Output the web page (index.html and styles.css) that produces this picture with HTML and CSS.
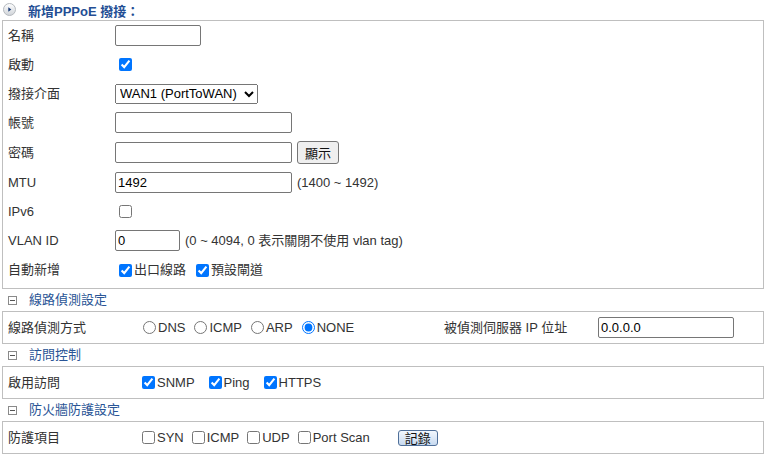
FILE: index.html
```html
<!DOCTYPE html>
<html>
<head>
<meta charset="utf-8">
<title>PPPoE</title>
<link rel="stylesheet" href="styles.css">
</head>
<body>
<div class="page">
  <div class="title">
    <svg class="title-icon" width="13" height="13" viewBox="0 0 13 13">
      <defs>
        <linearGradient id="bg" x1="0" y1="0" x2="0" y2="1">
          <stop offset="0" stop-color="#ffffff"/>
          <stop offset="1" stop-color="#cfd3d8"/>
        </linearGradient>
      </defs>
      <circle cx="6.5" cy="6.5" r="6" fill="url(#bg)" stroke="#b4b8bd" stroke-width="1"/>
      <path d="M5.3 4.2 L8.3 6.5 L5.3 8.8 Z" fill="#1d3e78"/>
    </svg>
    <span class="title-text">新增PPPoE 撥接：</span>
  </div>

  <div class="box form">
    <div class="row"><div class="lbl">名稱</div><div class="ctl"><input class="txt w86" type="text"></div></div>
    <div class="row"><div class="lbl">啟動</div><div class="ctl"><input type="checkbox" checked></div></div>
    <div class="row"><div class="lbl">撥接介面</div><div class="ctl"><select class="sel"><option>WAN1 (PortToWAN)</option></select></div></div>
    <div class="row"><div class="lbl">帳號</div><div class="ctl"><input class="txt w177" type="text"></div></div>
    <div class="row tall"><div class="lbl">密碼</div><div class="ctl"><input class="txt w177" type="password"><button class="btn-show" type="button">顯示</button></div></div>
    <div class="row"><div class="lbl">MTU</div><div class="ctl"><input class="txt w177" type="text" value="1492"><span class="hint">(1400 ~ 1492)</span></div></div>
    <div class="row"><div class="lbl">IPv6</div><div class="ctl"><input type="checkbox"></div></div>
    <div class="row"><div class="lbl">VLAN ID</div><div class="ctl"><input class="txt w65" type="text" value="0"><span class="hint">(0 ~ 4094, 0 表示關閉不使用 vlan tag)</span></div></div>
    <div class="row last"><div class="lbl">自動新增</div><div class="ctl"><label class="opt gap10"><input type="checkbox" checked>出口線路</label><label class="opt"><input type="checkbox" checked>預設閘道</label></div></div>
  </div>

  <div class="sec"><span class="minus"></span><span class="sec-text">線路偵測設定</span></div>
  <div class="box line detect">
    <div class="lbl">線路偵測方式</div>
    <div class="ctl">
      <label class="opt gap7"><input type="radio" name="m">DNS</label>
      <label class="opt gap7"><input type="radio" name="m">ICMP</label>
      <label class="opt gap7"><input type="radio" name="m">ARP</label>
      <label class="opt"><input type="radio" name="m" checked>NONE</label>
    </div>
    <div class="lbl">被偵測伺服器 IP 位址</div>
    <div class="ctl"><input class="txt w136" type="text" value="0.0.0.0"></div>
  </div>

  <div class="sec"><span class="minus"></span><span class="sec-text">訪問控制</span></div>
  <div class="box line">
    <div class="lbl">啟用訪問</div>
    <div class="ctl">
      <label class="opt gap14"><input type="checkbox" checked>SNMP</label>
      <label class="opt gap14"><input type="checkbox" checked>Ping</label>
      <label class="opt"><input type="checkbox" checked>HTTPS</label>
    </div>
  </div>

  <div class="sec"><span class="minus"></span><span class="sec-text">防火牆防護設定</span></div>
  <div class="box line">
    <div class="lbl">防護項目</div>
    <div class="ctl">
      <label class="opt gap8"><input type="checkbox">SYN</label>
      <label class="opt gap8"><input type="checkbox">ICMP</label>
      <label class="opt gap8"><input type="checkbox">UDP</label>
      <label class="opt"><input type="checkbox">Port Scan</label>
      <button class="btn-log" type="button">記錄</button>
    </div>
  </div>
</div>
</body>
</html>
```

FILE: styles.css
```css
html, body {
  margin: 0;
  padding: 0;
  background: #ffffff;
}

body {
  font-family: "Liberation Sans", Arial, "Noto Sans CJK TC", sans-serif;
  font-size: 13px;
  line-height: 16px;
  color: #333333;
}

.page {
  width: 762px;
  margin-left: 2px;
}

.title {
  height: 20px;
  display: flex;
  align-items: center;
}

.title-icon {
  display: block;
  margin: 0 0 2px 1px;
}

.title-text {
  margin-left: 12px;
  padding-top: 3px;
  color: #234e94;
  font-weight: bold;
}

.box {
  border: 1px solid #bfbfbf;
}

.form {
  padding: 0 0 3px 5px;
}

.row {
  display: grid;
  grid-template-columns: 107px 1fr;
  align-items: center;
  height: 29px;
}

.row.tall {
  height: 31px;
}

.row.last {
  height: 30px;
}

.lbl {
  color: #333333;
}

.ctl {
  display: flex;
  align-items: center;
}

.txt {
  box-sizing: border-box;
  height: 21px;
  border: 1px solid #767676;
  border-radius: 2px;
  padding: 1px 2px;
  margin: 0;
  font-family: "Liberation Sans", Arial, sans-serif;
  font-size: 13px;
  color: #000;
  background: #fff;
}

.w86 { width: 86px; }
.w177 { width: 177px; }
.w65 { width: 65px; }
.w136 { width: 136px; }

.sel {
  box-sizing: border-box;
  width: 143px;
  height: 20px;
  margin: 0;
  font-family: "Liberation Sans", Arial, sans-serif;
  font-size: 13px;
  color: #000;
}

.hint {
  margin-left: 5px;
  color: #333333;
}

.btn-show {
  box-sizing: border-box;
  width: 42px;
  height: 23px;
  margin-left: 5px;
  padding: 0;
  border: 1px solid #767676;
  border-radius: 3px;
  background: #efefef;
  font-family: "Noto Sans CJK TC", sans-serif;
  font-size: 13px;
  color: #111;
}

input[type="checkbox"] {
  width: 13px;
  height: 13px;
  margin: 0 2px 0 4px;
}

input[type="radio"] {
  width: 13px;
  height: 13px;
  margin: 0 2px 0 5px;
}

.opt {
  display: inline-flex;
  align-items: center;
}

.gap7 { margin-right: 4px; }
.gap8 { margin-right: 4px; }
.gap10 { margin-right: 6px; }
.gap14 { margin-right: 10px; }

.sec {
  height: 22px;
  display: flex;
  align-items: center;
  padding-left: 6px;
}

.minus {
  position: relative;
  box-sizing: border-box;
  width: 9px;
  height: 9px;
  border: 1px solid #8a8a8a;
  margin-right: 12px;
}

.minus::after {
  content: "";
  position: absolute;
  left: 1px;
  right: 1px;
  top: 3px;
  height: 1px;
  background: #555;
}

.sec-text {
  color: #2a5596;
}

.line {
  display: grid;
  grid-template-columns: 130px 1fr;
  align-items: center;
  height: 31px;
  padding-left: 5px;
}

.line.detect {
  grid-template-columns: 130px 306px 154px 1fr;
}

.btn-log {
  box-sizing: border-box;
  width: 40px;
  height: 16px;
  margin-left: 28px;
  padding: 0;
  border: 1px solid #4f6f99;
  border-radius: 3px;
  background: linear-gradient(#f2f7fd, #c8daf0);
  font-family: "Noto Sans CJK TC", sans-serif;
  font-size: 13px;
  line-height: 14px;
  color: #111;
}
```
